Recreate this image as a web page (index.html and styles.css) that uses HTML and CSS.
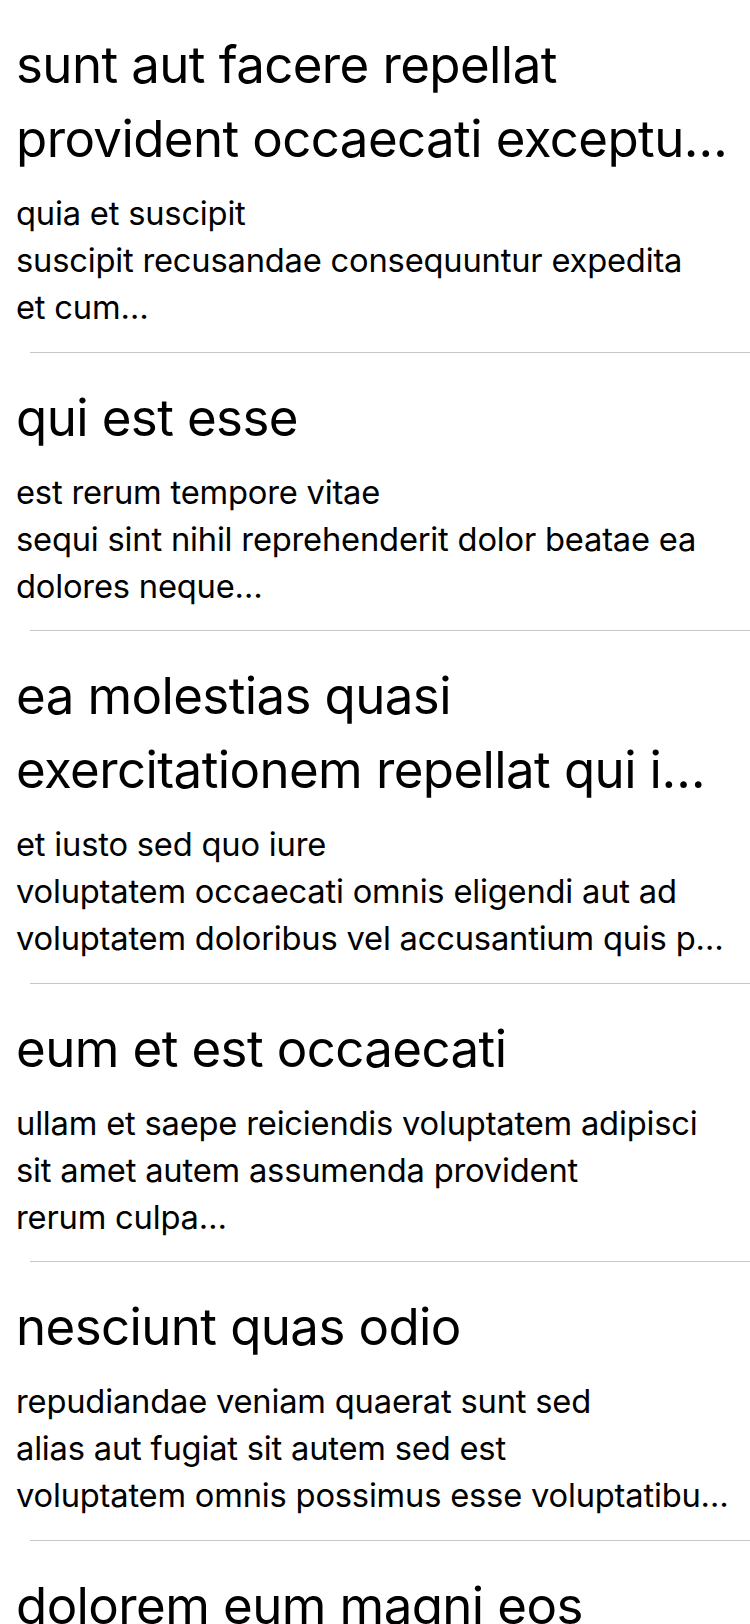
FILE: index.html
```html
<!DOCTYPE html>
<html>
<head>
<meta charset="utf-8">
<link rel="stylesheet" href="styles.css">
</head>
<body>
<ul class="list">
  <li class="post">
    <h2 class="title"><span class="ln">sunt aut facere repellat</span><span class="ln">provident occaecati exceptu…</span></h2>
    <p class="body"><span class="ln">quia et suscipit</span><span class="ln">suscipit recusandae consequuntur expedita</span><span class="ln">et cum…</span></p>
  </li>
  <li class="post">
    <h2 class="title"><span class="ln">qui est esse</span></h2>
    <p class="body"><span class="ln">est rerum tempore vitae</span><span class="ln">sequi sint nihil reprehenderit dolor beatae ea</span><span class="ln">dolores neque…</span></p>
  </li>
  <li class="post">
    <h2 class="title"><span class="ln">ea molestias quasi</span><span class="ln">exercitationem repellat qui i…</span></h2>
    <p class="body"><span class="ln">et iusto sed quo iure</span><span class="ln">voluptatem occaecati omnis eligendi aut ad</span><span class="ln">voluptatem doloribus vel accusantium quis p…</span></p>
  </li>
  <li class="post">
    <h2 class="title"><span class="ln">eum et est occaecati</span></h2>
    <p class="body"><span class="ln">ullam et saepe reiciendis voluptatem adipisci</span><span class="ln">sit amet autem assumenda provident</span><span class="ln">rerum culpa…</span></p>
  </li>
  <li class="post">
    <h2 class="title"><span class="ln">nesciunt quas odio</span></h2>
    <p class="body"><span class="ln">repudiandae veniam quaerat sunt sed</span><span class="ln">alias aut fugiat sit autem sed est</span><span class="ln">voluptatem omnis possimus esse voluptatibu…</span></p>
  </li>
  <li class="post">
    <h2 class="title"><span class="ln">dolorem eum magni eos</span><span class="ln">aperiam quia</span></h2>
  </li>
</ul>
</body>
</html>
```
FILE: styles.css
```css
html, body {
  margin: 0;
  padding: 0;
  background: #ffffff;
}
body {
  font-family: Inter, "Noto Sans", sans-serif;
  color: #000000;
  overflow: hidden;
  height: 1624px;
}
.list {
  list-style: none;
  margin: 0;
  padding: 0;
}
.post {
  position: relative;
  padding: 28px 16px 21.5px 16px;
}
.post::after {
  content: "";
  position: absolute;
  left: 30px;
  right: 0;
  bottom: 0;
  height: 1px;
  background: #c8c7cc;
}
.title {
  margin: 0;
  font-size: 51px;
  font-weight: 400;
  line-height: 74px;
  letter-spacing: -0.6px;
}
.body {
  margin: 14px 0 0 0;
  font-size: 32.7px;
  line-height: 47px;
  letter-spacing: -0.2px;
}
.ln {
  display: block;
  white-space: nowrap;
}
```
